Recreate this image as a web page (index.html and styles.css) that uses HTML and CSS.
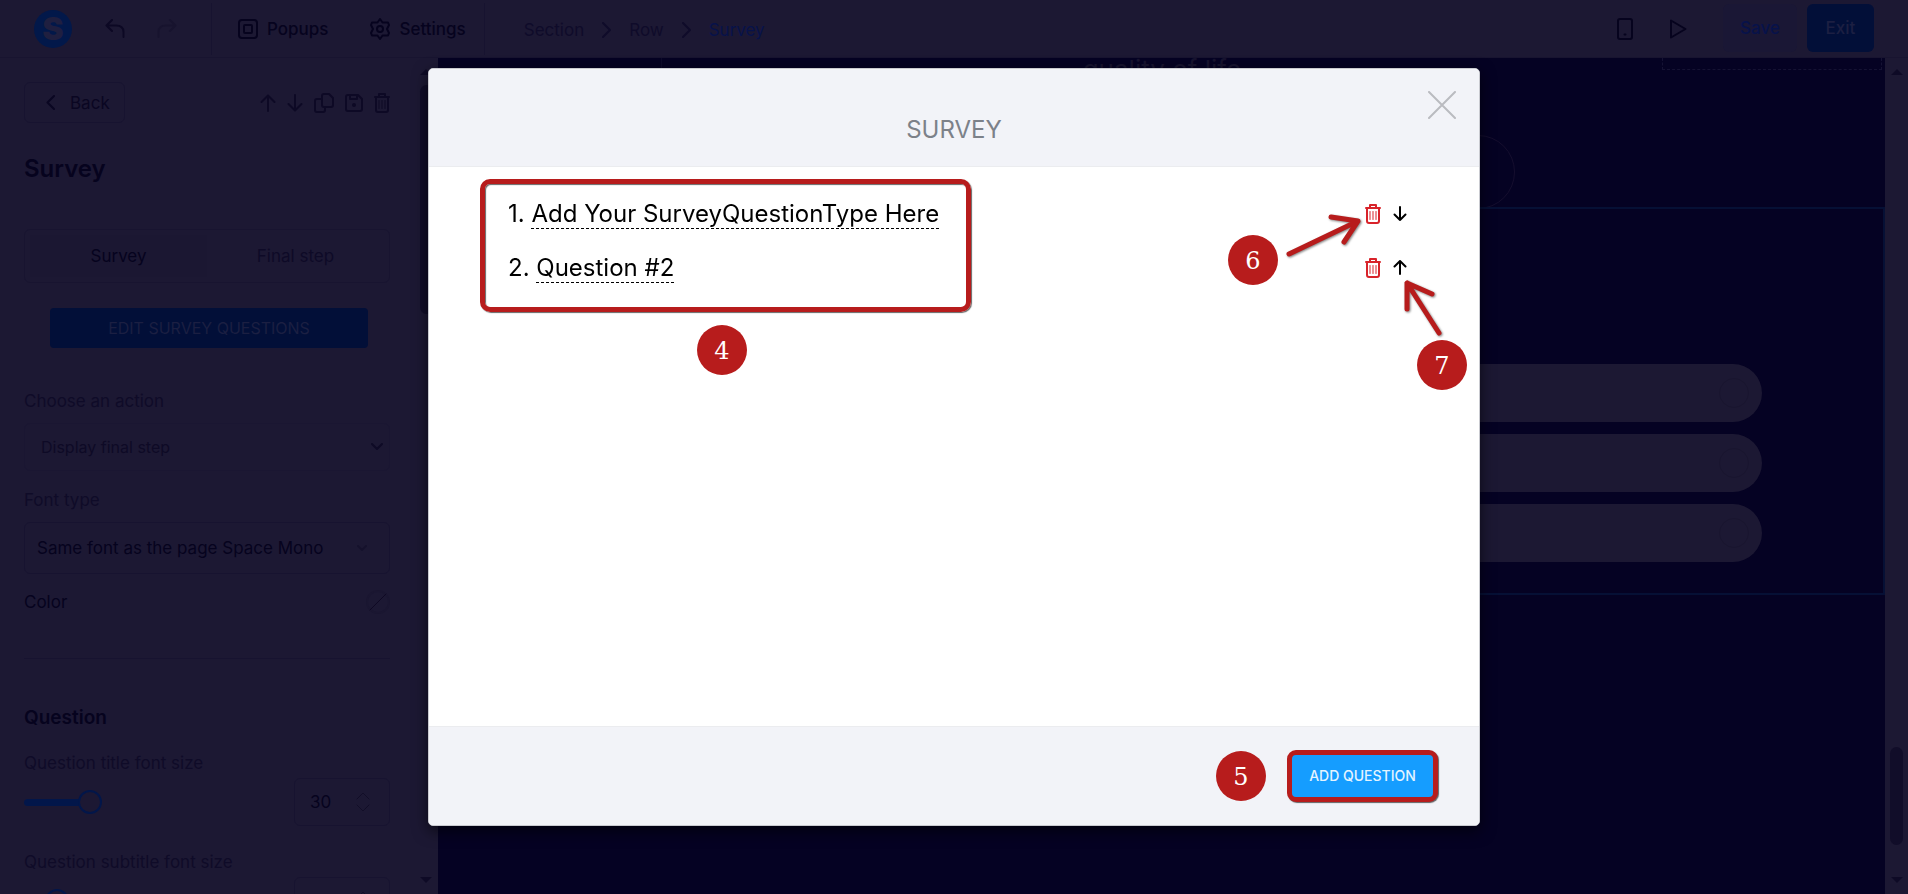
FILE: index.html
```
<!DOCTYPE html>
<html lang="en">
<head>
  <meta charset="UTF-8">
  <meta name="viewport" content="width=device-width, initial-scale=1.0">
  <title>Survey</title>
  <link rel="stylesheet" href="styles.css">
</head>
<body>

  <div class="app">
    <!-- Top bar -->
    <header class="topbar">
      <a class="logo" href="#" aria-label="Home">S</a>
      <div class="history">
        <button class="icon-btn" aria-label="Undo">
          <svg width="20" height="20" viewBox="0 0 20 20"><path d="M7 1L1.500 6.500L7 12M1.500 6.500H11C16 6.500 18.500 9 18.500 13V18"/></svg>
        </button>
        <button class="icon-btn faded" aria-label="Redo">
          <svg width="20" height="20" viewBox="0 0 20 20"><path d="M13 1L18.500 6.500L13 12M18.500 6.500H9C4 6.500 1.500 9 1.500 13V18"/></svg>
        </button>
      </div>
      <nav class="tools">
        <button class="tool">
          <svg width="20" height="20" viewBox="0 0 20 20"><rect x="1" y="1" width="18" height="18" rx="3"/><rect x="6" y="6" width="8" height="8" rx="1"/></svg>
          Popups
        </button>
        <button class="tool">
          <svg width="20" height="22" viewBox="0 0 20 22"><path d="M10 1L12.500 4.500L18 4.500L19 7L17 11L19 15L18 17.500L12.500 17.500L10 21L7.500 17.500L2 17.500L1 15L3 11L1 7L2 4.500L7.500 4.500Z"/><circle cx="10" cy="11" r="3"/></svg>
          Settings
        </button>
      </nav>
      <nav class="breadcrumb">
        <a href="#">Section</a>
        <svg width="9" height="16" viewBox="0 0 9 16"><path d="M1 1L8 8L1 15"/></svg>
        <a href="#">Row</a>
        <svg width="9" height="16" viewBox="0 0 9 16"><path d="M1 1L8 8L1 15"/></svg>
        <a class="current" href="#">Survey</a>
      </nav>
      <div class="topbar-right">
        <button class="icon-btn" aria-label="Mobile view">
          <svg width="16" height="22" viewBox="0 0 16 22"><rect x="1" y="1" width="14" height="20" rx="2"/><path d="M7.500 16.500h1"/></svg>
        </button>
        <button class="icon-btn" aria-label="Preview">
          <svg width="18" height="22" viewBox="0 0 18 22"><path d="M2 2.500V19.500L16.500 11Z"/></svg>
        </button>
        <div class="main-actions">
          <button class="btn-save">Save</button>
          <button class="btn-exit">Exit</button>
        </div>
      </div>
    </header>

    <div class="workspace">
      <!-- Sidebar -->
      <aside class="sidebar">
        <div class="panel">
          <div class="panel-top">
            <button class="btn-back">
              <svg width="9" height="15" viewBox="0 0 9 15"><path d="M8 1L1.500 7.500L8 14"/></svg>
              Back
            </button>
            <div class="panel-icons">
              <button class="icon-btn" aria-label="Move up">
                <svg width="16" height="18" viewBox="0 0 16 18"><path d="M8 17V2M1.500 8L8 1.500L14.500 8"/></svg>
              </button>
              <button class="icon-btn" aria-label="Move down">
                <svg width="16" height="18" viewBox="0 0 16 18"><path d="M8 1V16M1.500 10L8 16.500L14.500 10"/></svg>
              </button>
              <button class="icon-btn" aria-label="Duplicate">
                <svg width="20" height="20" viewBox="0 0 20 20"><path d="M10 1H15L19 5V12A2 2 0 0 1 17 14H10A2 2 0 0 1 8 12V3A2 2 0 0 1 10 1M8 6H3A2 2 0 0 0 1 8V17A2 2 0 0 0 3 19H9A2 2 0 0 0 11 17V14"/></svg>
              </button>
              <button class="icon-btn" aria-label="Save block">
                <svg width="18" height="18" viewBox="0 0 18 18"><path d="M3 1H13L17 5V15A2 2 0 0 1 15 17H3A2 2 0 0 1 1 15V3A2 2 0 0 1 3 1M5 1V5H12V1"/><circle cx="9" cy="11" r="1"/></svg>
              </button>
              <button class="icon-btn" aria-label="Delete block">
                <svg width="16" height="20" viewBox="0 0 16 20"><path d="M1 4H15M5 4V1H11V4M2 4V17A2 2 0 0 0 4 19H12A2 2 0 0 0 14 17V4"/><path class="thin" d="M5 7.500V15.500M8 7.500V15.500M11 7.500V15.500"/></svg>
              </button>
            </div>
          </div>

          <h1>Survey</h1>

          <div class="tabs">
            <button class="tab active">Survey</button>
            <button class="tab">Final step</button>
          </div>

          <button class="btn-edit">EDIT SURVEY QUESTIONS</button>

          <label class="label" for="action">Choose an action</label>
          <div class="select-box plain">
            <select id="action"><option>Display final step</option></select>
            <svg width="12" height="8" viewBox="0 0 12 8"><path d="M1 1L6 6L11 1"/></svg>
          </div>

          <label class="label" for="font">Font type</label>
          <div class="select-box">
            <select id="font"><option>Same font as the page Space Mono</option></select>
            <svg class="faded" width="12" height="8" viewBox="0 0 12 8"><path d="M2 2L6 6L10 2"/></svg>
          </div>

          <div class="color-row">
            <span>Color</span>
            <button class="swatch" aria-label="Color">
              <svg width="24" height="24" viewBox="0 0 24 24"><circle cx="12" cy="12" r="11"/><path d="M4 20L20 4"/></svg>
            </button>
          </div>

          <hr>

          <h2>Question</h2>

          <label class="label" for="title-size">Question title font size</label>
          <div class="slider-row">
            <input class="slider" type="range" id="title-size" min="10" max="100" value="31">
            <div class="number-box">
              <input type="text" value="30" aria-label="Title size in pixels">
              <svg width="14" height="20" viewBox="0 0 14 20"><path d="M1 7L7 1L13 7M1 13L7 19L13 13"/></svg>
            </div>
          </div>

          <label class="label" for="subtitle-size">Question subtitle font size</label>
          <div class="slider-row">
            <input class="slider short" type="range" id="subtitle-size" min="10" max="100" value="18">
            <div class="number-box">
              <input type="text" aria-label="Subtitle size in pixels">
              <svg width="14" height="20" viewBox="0 0 14 20"><path d="M1 7L7 1L13 7M1 13L7 19L13 13"/></svg>
            </div>
          </div>
        </div>
        <div class="scrollbar">
          <svg width="12" height="6" viewBox="0 0 12 6"><path d="M0 6L6 0L12 6Z"/></svg>
          <div class="thumb thumb-top"></div>
          <svg width="12" height="6" viewBox="0 0 12 6"><path d="M0 0L6 6L12 0Z"/></svg>
        </div>
      </aside>

      <!-- Page preview -->
      <main class="canvas">
        <div class="page">
          <div class="page-text">
            <div class="column"></div>
            <p>quality of life</p>
            <div class="column dashed"></div>
          </div>
          <div class="step-circle"></div>
          <section class="survey-block">
            <div class="answer"><span class="dot"></span></div>
            <div class="answer"><span class="dot"></span></div>
            <div class="answer"><span class="dot"></span></div>
          </section>
        </div>
        <div class="scrollbar">
          <svg width="12" height="6" viewBox="0 0 12 6"><path d="M0 6L6 0L12 6Z"/></svg>
          <div class="thumb thumb-bottom"></div>
          <svg width="12" height="6" viewBox="0 0 12 6"><path d="M0 0L6 6L12 0Z"/></svg>
        </div>
      </main>
    </div>
  </div>

  <!-- Survey questions window -->
  <div class="overlay">
    <div class="modal" role="dialog" aria-labelledby="modal-title">
      <div class="modal-header">
        <h3 id="modal-title">SURVEY</h3>
        <button class="close" aria-label="Close">
          <svg width="28" height="28" viewBox="0 0 28 28"><path d="M1 1L27 27M27 1L1 27"/></svg>
        </button>
      </div>

      <div class="modal-body">
        <div class="question">
          <span>1. <a class="question-name" href="#">Add Your SurveyQuestionType Here</a></span>
          <div class="question-actions">
            <button class="icon-btn delete" aria-label="Delete question 1">
              <svg width="16" height="20" viewBox="0 0 16 20"><path d="M1 4H15M5 4V1H11V4M2 4V17A2 2 0 0 0 4 19H12A2 2 0 0 0 14 17V4"/><path class="thin" d="M5 7.500V15.500M8 7.500V15.500M11 7.500V15.500"/></svg>
            </button>
            <button class="icon-btn" aria-label="Move question 1 down">
              <svg width="14" height="16" viewBox="0 0 14 16"><path d="M7 1V14M1.500 8.500L7 14L12.500 8.500"/></svg>
            </button>
          </div>
        </div>
        <div class="question">
          <span>2. <a class="question-name" href="#">Question #2</a></span>
          <div class="question-actions">
            <button class="icon-btn delete" aria-label="Delete question 2">
              <svg width="16" height="20" viewBox="0 0 16 20"><path d="M1 4H15M5 4V1H11V4M2 4V17A2 2 0 0 0 4 19H12A2 2 0 0 0 14 17V4"/><path class="thin" d="M5 7.500V15.500M8 7.500V15.500M11 7.500V15.500"/></svg>
            </button>
            <button class="icon-btn" aria-label="Move question 2 up">
              <svg width="14" height="16" viewBox="0 0 14 16"><path d="M7 14V1M1.500 6.500L7 1L12.500 6.500"/></svg>
            </button>
          </div>
        </div>

        <!-- Tutorial marks -->
        <div class="frame frame-questions"></div>
        <span class="mark mark-4">4</span>
        <span class="mark mark-6">6</span>
        <span class="mark mark-7">7</span>
        <svg class="arrow arrow-6" width="80" height="40" viewBox="0 0 80 40"><path d="M5 37L74 4M47 0L74 4L60 25"/></svg>
        <svg class="arrow arrow-7" width="40" height="60" viewBox="0 0 40 60"><path d="M36 54L4 4M29 15L4 4V30"/></svg>
      </div>

      <div class="modal-footer">
        <span class="mark">5</span>
        <button class="btn-add">ADD QUESTION</button>
      </div>
    </div>
  </div>

</body>
</html>
```
FILE: styles.css
```
/* Global */
* {
  box-sizing: border-box;
}

body {
  margin: 0;
  font-family: Inter, sans-serif;
  font-size: 17px;
  line-height: 20px;
  color: #06031e;
  background: #050223;
  overflow: hidden;
}

button, input, select {
  font: inherit;
  color: inherit;
  background: none;
  border: none;
  padding: 0;
  margin: 0;
}

button {
  cursor: pointer;
}

a {
  color: inherit;
  text-decoration: none;
}

h1, h2, h3, p {
  margin: 0;
}

svg {
  display: block;
  flex: none;
  fill: none;
  stroke: currentColor;
  stroke-width: 2;
  stroke-linecap: round;
  stroke-linejoin: round;
}

.faded {
  opacity: 0.3;
}

.app {
  height: 100vh;
  display: flex;
  flex-direction: column;
}

/* Top bar */
.topbar {
  display: flex;
  align-items: center;
  height: 58px;
  flex: none;
  padding: 0 34px;
  background: #1c1833;
  border-bottom: 1px solid #181430;
}

.logo {
  width: 38px;
  height: 38px;
  border-radius: 50%;
  background: #02184a;
  color: #1f1f40;
  font-size: 32px;
  line-height: 38px;
  font-weight: 900;
  text-align: center;
}

.history {
  display: flex;
  gap: 32px;
  padding: 0 34px 0 33px;
  color: #0c0824;
}

.tools {
  display: flex;
  align-items: center;
  gap: 42px;
  height: 52px;
  padding: 0 18px 0 26px;
  border-left: 1px solid #171330;
  border-right: 1px solid #171330;
}

.tool {
  display: flex;
  align-items: center;
  gap: 9px;
  font-weight: 500;
}

.breadcrumb {
  display: flex;
  align-items: center;
  gap: 18px;
  padding: 2px 0 0 39px;
  color: #0f0b2a;
}

.current {
  color: #07124a;
}

.topbar-right {
  display: flex;
  align-items: center;
  gap: 36px;
  margin-left: auto;
}

.main-actions {
  display: flex;
  gap: 10px;
  height: 48px;
  margin-bottom: 2px;
  font-weight: 500;
}

.btn-save {
  width: 74px;
  border-radius: 6px;
  background: #1a1735;
  color: #07124a;
}

.btn-exit {
  width: 67px;
  border-radius: 6px;
  background: #020f38;
  color: #1c1f42;
}

.workspace {
  display: flex;
  flex: 1;
  min-height: 0;
}

/* Sidebar */
.sidebar {
  display: flex;
  flex: none;
  width: 438px;
  background: #1c1833;
  overflow: hidden;
}

.panel {
  display: flex;
  flex-direction: column;
  flex: 1;
  padding: 24px 24px 0;
}

.panel-top {
  display: flex;
  align-items: center;
  justify-content: space-between;
}

.btn-back {
  display: flex;
  align-items: center;
  gap: 15px;
  height: 41px;
  padding: 0 14px 0 21px;
  border: 1px solid #171330;
  border-radius: 6px;
  color: #0a0622;
}

.panel-icons {
  display: flex;
  align-items: center;
  gap: 11px;
  color: #0d0925;
}

.panel h1 {
  margin-top: 31px;
  font-size: 24px;
  line-height: 30px;
  font-weight: 600;
}

.tabs {
  display: flex;
  flex: none;
  height: 54px;
  margin-top: 45px;
  padding: 5px;
  border: 1px solid #181430;
  border-radius: 6px;
}

.tab {
  flex: 1;
  color: #0e0a27;
}

.tab.active {
  color: #06031e;
  background: #1b1732;
}

.btn-edit {
  flex: none;
  height: 40px;
  margin: 25px 22px 33px 26px;
  border-radius: 4px;
  background: #020f38;
  font-size: 16px;
  color: #1b1f42;
}

.label {
  margin-top: 10px;
  color: #0f0b28;
}

.select-box {
  display: flex;
  flex: none;
  align-items: center;
  height: 52px;
  margin: 12px 0 9px;
  padding: 0 21px 0 12px;
  border: 1px solid #171330;
  border-radius: 6px;
}

.select-box select {
  flex: 1;
  appearance: none;
}

.plain {
  height: 48px;
  padding: 0 6px 0 16px;
  border-color: #1a1632;
  font-size: 16px;
  color: #0e0a26;
}

.color-row {
  display: flex;
  align-items: center;
  justify-content: space-between;
  margin-top: 7px;
}

.swatch {
  color: #0f0924;
}

.swatch circle {
  stroke: #1a1631;
}

.swatch path {
  stroke-width: 1;
}

hr {
  width: 100%;
  margin: 44px 0 46px;
  border: none;
  border-top: 1px solid #171330;
}

.panel h2 {
  margin-bottom: 12px;
  font-size: 19px;
  line-height: 26px;
  font-weight: 600;
}

.slider-row {
  display: flex;
  flex: none;
  align-items: center;
  gap: 14px;
  margin: 5px 0 16px;
}

.slider {
  flex: 1;
  min-width: 0;
  height: 24px;
  appearance: none;
}

.slider::-webkit-slider-runnable-track {
  height: 7px;
  border-radius: 4px;
  background: linear-gradient(#02164a, #02164a) no-repeat;
  background-size: 24% 100%;
}

.short::-webkit-slider-runnable-track {
  background-size: 12% 100%;
}

.slider::-webkit-slider-thumb {
  appearance: none;
  width: 24px;
  height: 24px;
  margin-top: -9px;
  border: 2px solid #02164a;
  border-radius: 50%;
  background: #1c1833;
}

.number-box {
  display: flex;
  align-items: center;
  width: 96px;
  height: 48px;
  padding: 0 19px 0 15px;
  border: 1px solid #171330;
  border-radius: 6px;
}

.number-box input {
  flex: 1;
  min-width: 0;
}

.number-box svg {
  color: #120e28;
  stroke-width: 1;
}

/* Scrollbars */
.scrollbar {
  display: flex;
  flex: none;
  flex-direction: column;
  align-items: center;
  width: 23px;
  padding: 11px 0;
  background: #1c1833;
}

.scrollbar svg {
  fill: #0e0a26;
  stroke: none;
}

.sidebar .scrollbar {
  width: 24px;
}

.thumb {
  width: 13px;
  border-radius: 7px;
  background: #110d29;
}

.thumb-top {
  height: 229px;
  margin: 10px 0 auto;
}

.thumb-bottom {
  height: 98px;
  margin: auto 0 32px;
}

/* Page preview */
.canvas {
  display: flex;
  flex: 1;
  min-width: 0;
}

.page {
  flex: 1;
  min-width: 0;
}

.page-text {
  display: flex;
  justify-content: space-between;
  height: 12px;
  padding-right: 3px;
  font-size: 26px;
  line-height: 24px;
  color: #17132f;
}

.column {
  width: 224px;
  border-right: 1px solid #0d0a2b;
}

.dashed {
  width: 220px;
  border: 1px dashed #151233;
  border-top: none;
}

.step-circle {
  width: 74px;
  height: 74px;
  margin: 65px 370px 0 auto;
  border: 1px solid #150e2e;
  border-radius: 50%;
}

.survey-block {
  display: flex;
  flex-direction: column;
  gap: 12px;
  height: 388px;
  margin-top: -2px;
  padding: 155px 121px 0;
  border: 2px solid #061035;
}

.answer {
  display: flex;
  align-items: center;
  justify-content: flex-end;
  height: 58px;
  flex: none;
  padding-right: 13px;
  border-radius: 29px;
  background: #1c1833;
}

.dot {
  width: 30px;
  height: 30px;
  border: 1px solid #19152f;
  border-radius: 50%;
}

/* Modal */
.overlay {
  position: fixed;
  inset: 0;
  display: flex;
  justify-content: center;
  padding: 68px 20px;
}

.modal {
  display: flex;
  flex-direction: column;
  width: 100%;
  max-width: 1052px;
  border: 1px solid #c9cad0;
  border-radius: 5px;
  background: #fff;
  box-shadow: 0 5px 15px rgba(0, 0, 0, 0.6);
  color: #000;
}

.modal-header {
  position: relative;
  height: 98px;
  padding-top: 46px;
  border-bottom: 1px solid #ebecef;
  border-radius: 4px 4px 0 0;
  background: #f2f3f8;
  text-align: center;
}

.modal-header h3 {
  font-size: 24px;
  line-height: 30px;
  font-weight: 400;
  color: #7c8189;
}

.close {
  position: absolute;
  top: 22px;
  right: 23px;
  color: #babbc0;
}

.modal-body {
  position: relative;
  flex: 1;
  padding: 20px 72px 0 79px;
}

.question {
  display: flex;
  align-items: center;
  justify-content: space-between;
  height: 54px;
  font-size: 24px;
  line-height: 30px;
}

.question-name {
  border-bottom: 1px dashed #000;
}

.question-actions {
  display: flex;
  align-items: center;
  gap: 12px;
}

.delete {
  color: #d8232a;
}

.thin {
  stroke-width: 1;
}

.modal-footer {
  display: flex;
  align-items: center;
  justify-content: flex-end;
  gap: 21px;
  height: 99px;
  padding: 0 41px 1px 0;
  border-top: 1px solid #ebecef;
  border-radius: 0 0 4px 4px;
  background: #f2f3f8;
}

.btn-add {
  width: 151px;
  height: 52px;
  border: 5px solid #b71c1c;
  border-radius: 9px;
  background: #159dff;
  box-shadow: 1px 1px 1px rgba(0, 0, 0, 0.6);
  font-size: 14px;
  font-weight: 500;
  color: #e4f4ff;
}

/* Tutorial marks */
.mark {
  width: 50px;
  height: 50px;
  border-radius: 50%;
  background: #b71c1c;
  color: #fff;
  font-family: "DejaVu Serif", serif;
  font-size: 24px;
  line-height: 52px;
  text-align: center;
}

.frame {
  position: absolute;
  border: 5px solid #b71c1c;
  border-radius: 10px;
  box-shadow: 1px 1px 1px rgba(0, 0, 0, 0.6), inset 1px 1px 1px rgba(0, 0, 0, 0.6);
  pointer-events: none;
}

.frame-questions {
  top: 12px;
  left: 51px;
  width: 491px;
  height: 133px;
}

.mark-4, .mark-6, .mark-7, .arrow {
  position: absolute;
}

.mark-4 {
  top: 158px;
  left: 268px;
}

.mark-6 {
  top: 68px;
  right: 201px;
}

.mark-7 {
  top: 173px;
  right: 12px;
}

.arrow {
  color: #b71c1c;
  stroke-width: 5;
  overflow: visible;
  filter: drop-shadow(1px 1px 1px rgba(0, 0, 0, 0.5));
}

.arrow-6 {
  top: 50px;
  right: 115px;
}

.arrow-7 {
  top: 112px;
  right: 36px;
}
```
